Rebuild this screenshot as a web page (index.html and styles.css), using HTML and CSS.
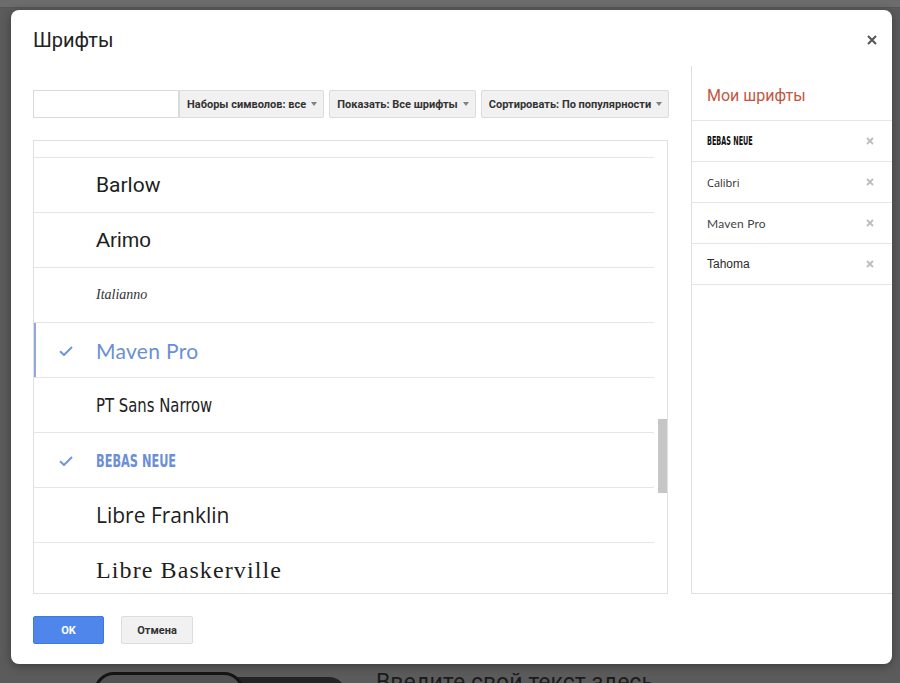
FILE: index.html
```html
<!DOCTYPE html>
<html lang="ru">
<head>
<meta charset="utf-8">
<title>Шрифты</title>
<link rel="stylesheet" href="styles.css">
</head>
<body>
<div class="page">
  <div class="topbar"></div>
  <div class="page-row">
    <div class="pills">
      <div class="pill-outline"></div>
      <div class="pill-dark"></div>
    </div>
    <div class="page-text">Введите свой текст здесь</div>
  </div>
</div>

<div class="dialog">
  <div class="dlg-header">
    <h1 class="dlg-title">Шрифты</h1>
    <button class="dlg-close" aria-label="Закрыть">
      <svg width="10" height="10" viewBox="0 0 10 10"><path d="M1 1L9 9M9 1L1 9" stroke="#555" stroke-width="2" fill="none"/></svg>
    </button>
  </div>

  <div class="dlg-main">
    <div class="toolbar">
      <input class="search" type="text">
      <div class="dropdown dd-first"><span>Наборы символов: все</span><i class="caret"></i></div>
      <div class="dropdown"><span>Показать: Все шрифты</span><i class="caret"></i></div>
      <div class="dropdown dd-last"><span>Сортировать: По популярности</span><i class="caret"></i></div>
    </div>

    <div class="font-list">
      <div class="rows">
        <div class="row row-partial"></div>
        <div class="row"><span class="fn f-barlow">Barlow</span></div>
        <div class="row"><span class="fn f-arimo">Arimo</span></div>
        <div class="row"><span class="fn f-italianno">Italianno</span></div>
        <div class="row row-active selected">
          <svg class="check" width="14" height="10" viewBox="0 0 14 10"><path d="M1 5.2L5 9L13 1" stroke="#7097da" stroke-width="2" fill="none"/></svg>
          <span class="fn f-maven">Maven Pro</span>
        </div>
        <div class="row"><span class="fn f-ptnarrow">PT Sans Narrow</span></div>
        <div class="row selected">
          <svg class="check" width="14" height="10" viewBox="0 0 14 10"><path d="M1 5.2L5 9L13 1" stroke="#7097da" stroke-width="2" fill="none"/></svg>
          <span class="fn f-bebas">BEBAS NEUE</span>
        </div>
        <div class="row"><span class="fn f-franklin">Libre Franklin</span></div>
        <div class="row"><span class="fn f-basker">Libre Baskerville</span></div>
      </div>
      <div class="scrolltrack"><div class="thumb"></div></div>
    </div>
  </div>

  <aside class="my-fonts">
    <h2 class="my-title">Мои шрифты</h2>
    <ul class="my-list">
      <li><span class="mf mf-bebas">BEBAS NEUE</span><svg class="rm" width="8" height="8" viewBox="0 0 8 8"><path d="M1 1L7 7M7 1L1 7" stroke="#bdbdbd" stroke-width="1.8" fill="none"/></svg></li>
      <li><span class="mf mf-calibri">Calibri</span><svg class="rm" width="8" height="8" viewBox="0 0 8 8"><path d="M1 1L7 7M7 1L1 7" stroke="#bdbdbd" stroke-width="1.8" fill="none"/></svg></li>
      <li><span class="mf mf-maven">Maven Pro</span><svg class="rm" width="8" height="8" viewBox="0 0 8 8"><path d="M1 1L7 7M7 1L1 7" stroke="#bdbdbd" stroke-width="1.8" fill="none"/></svg></li>
      <li><span class="mf mf-tahoma">Tahoma</span><svg class="rm" width="8" height="8" viewBox="0 0 8 8"><path d="M1 1L7 7M7 1L1 7" stroke="#bdbdbd" stroke-width="1.8" fill="none"/></svg></li>
    </ul>
  </aside>

  <div class="dlg-footer">
    <button class="btn btn-ok">OK</button>
    <button class="btn btn-cancel">Отмена</button>
  </div>
</div>
</body>
</html>
```

FILE: styles.css
```css
html, body {
  margin: 0;
  padding: 0;
  height: 100%;
  overflow: hidden;
}
body {
  background: #5b5b5b;
  font-family: Roboto, "Liberation Sans", Arial, sans-serif;
  color: #222;
}

/* backdrop page */
.page {
  display: flex;
  flex-direction: column;
}
.topbar {
  height: 7px;
  background: #6c6c6c;
  border-bottom: 1px solid #575757;
}
.page-row {
  display: flex;
  align-items: flex-start;
  margin-top: 664px;
}
.pills {
  display: flex;
  align-items: flex-start;
  margin-left: 94px;
}
.pill-outline {
  width: 144px;
  height: 34px;
  border: 3px solid #141414;
  border-radius: 20px;
  background: #525252;
  position: relative;
  z-index: 1;
}
.pill-dark {
  width: 112px;
  height: 34px;
  margin-left: -10px;
  margin-top: 5px;
  background: #242424;
  border-radius: 0 18px 18px 0;
}
.page-text {
  margin-left: 30px;
  margin-top: -3px;
  font-size: 23px;
  line-height: 28px;
  color: #1b1b1b;
}

/* dialog */
.dialog {
  position: absolute;
  left: 11px;
  top: 10px;
  width: 881px;
  height: 654px;
  background: #fff;
  border-radius: 8px;
  box-shadow: 0 2px 10px rgba(0,0,0,0.35);
  display: grid;
  grid-template-columns: minmax(0, 1fr) 201px;
  grid-template-rows: 56px minmax(0, 1fr) 70px;
  overflow: hidden;
}
.dlg-header {
  grid-column: 1 / -1;
  display: flex;
  align-items: center;
  justify-content: space-between;
  padding: 4px 15px 0 22px;
}
.dlg-title {
  margin: 0;
  font-weight: 400;
  font-size: 20px;
  color: #222;
}
.dlg-close {
  border: 0;
  background: none;
  padding: 0;
  width: 10px;
  height: 10px;
  display: flex;
}

.dlg-main {
  display: flex;
  flex-direction: column;
  gap: 22px;
  padding: 24px 23px 0 22px;
  min-height: 0;
  min-width: 0;
}
.toolbar {
  display: flex;
  height: 28px;
}
.search {
  box-sizing: border-box;
  width: 146px;
  flex: none;
  height: 28px;
  margin: 0;
  border: 1px solid #d9d9d9;
  background: #fff;
  padding: 0 6px;
}
.dropdown {
  box-sizing: border-box;
  height: 28px;
  display: flex;
  align-items: center;
  gap: 5px;
  padding: 0 6px 0 7px;
  background: #f1f1f1;
  border: 1px solid #dcdcdc;
  border-radius: 2px;
  font-size: 11px;
  font-weight: 700;
  color: #333;
  margin-left: 5px;
  white-space: nowrap;
}
.dd-first {
  margin-left: 0;
  border-radius: 0 2px 2px 0;
}
.dd-last {
  flex: 1;
}
.caret {
  width: 0;
  height: 0;
  border-left: 3px solid transparent;
  border-right: 3px solid transparent;
  border-top: 4px solid #808080;
}

.font-list {
  flex: 1;
  min-height: 0;
  border: 1px solid #e0e0e0;
  display: grid;
  grid-template-columns: minmax(0, 1fr) 13px;
  overflow: hidden;
}
.rows {
  display: flex;
  flex-direction: column;
  overflow: hidden;
}
.row {
  flex: 0 0 54px;
  border-bottom: 1px solid #e6e6e6;
  display: flex;
  align-items: center;
  padding-left: 62px;
  position: relative;
}
.row-partial {
  flex-basis: 16px;
}
.row-active {
  box-shadow: inset 2px 0 0 #93a9de;
}
.check {
  position: absolute;
  left: 25px;
  top: 23px;
}
.fn {
  white-space: nowrap;
  color: #1e1e1e;
}
.selected .fn {
  color: #6a8fd6;
}
.f-barlow {
  font-family: Roboto, sans-serif;
  font-size: 21px;
}
.f-arimo {
  font-family: "Liberation Sans", Arimo, sans-serif;
  font-size: 21px;
}
.f-italianno {
  font-family: "Liberation Serif", serif;
  font-style: italic;
  font-size: 14px;
  color: #333;
}
.f-maven {
  font-family: Lato, sans-serif;
  font-size: 21px;
  letter-spacing: 0.3px;
}
.f-ptnarrow {
  display: inline-block;
  font-family: "DejaVu Sans Condensed", sans-serif;
  font-size: 19px;
  transform: scaleX(0.87);
  transform-origin: left center;
}
.f-bebas {
  display: inline-block;
  font-family: "DejaVu Sans Condensed", sans-serif;
  font-weight: 700;
  font-size: 18px;
  transform: scaleX(0.7);
  transform-origin: left center;
}
.f-franklin {
  font-family: "Open Sans", sans-serif;
  font-size: 21px;
}
.f-basker {
  font-family: "Liberation Serif", serif;
  font-size: 24px;
  letter-spacing: 1.1px;
}
.scrolltrack {
  display: flex;
  flex-direction: column;
  align-items: flex-end;
}
.thumb {
  margin-top: 278px;
  width: 9px;
  height: 74px;
  background: #c6c6c6;
}

/* my fonts panel */
.my-fonts {
  border-left: 1px solid #e0e0e0;
  border-bottom: 1px solid #e0e0e0;
  display: flex;
  flex-direction: column;
  min-width: 0;
}
.my-title {
  box-sizing: border-box;
  margin: 0;
  height: 55px;
  display: flex;
  align-items: center;
  padding: 4px 0 0 15px;
  font-size: 16px;
  font-weight: 400;
  color: #c2573f;
  border-bottom: 1px solid #e6e6e6;
}
.my-list {
  list-style: none;
  margin: 0;
  padding: 0;
}
.my-list li {
  height: 40px;
  border-bottom: 1px solid #e6e6e6;
  display: flex;
  align-items: center;
  justify-content: space-between;
  padding: 0 18px 0 15px;
}
.mf {
  color: #2a2a2a;
  white-space: nowrap;
}
.mf-bebas {
  display: inline-block;
  font-family: "DejaVu Sans Condensed", sans-serif;
  font-weight: 700;
  font-size: 12px;
  transform: scaleX(0.6);
  transform-origin: left center;
  color: #111;
}
.mf-calibri {
  font-family: "Open Sans", sans-serif;
  font-size: 11px;
}
.mf-maven {
  font-family: Lato, sans-serif;
  font-size: 12px;
  color: #444;
  letter-spacing: 0.2px;
}
.mf-tahoma {
  font-family: "Liberation Sans", sans-serif;
  font-size: 12px;
}
.rm {
  flex: none;
}

/* footer */
.dlg-footer {
  grid-column: 1 / -1;
  display: flex;
  align-items: flex-start;
  gap: 17px;
  padding: 22px 22px 0;
}
.btn {
  height: 28px;
  box-sizing: border-box;
  font-family: Roboto, "Liberation Sans", sans-serif;
  font-size: 11px;
  font-weight: 700;
  border-radius: 2px;
  padding: 0;
  cursor: pointer;
}
.btn-ok {
  width: 71px;
  background: #4f86ec;
  border: 1px solid #3f79e6;
  color: #fff;
}
.btn-cancel {
  width: 72px;
  background: #f1f1f1;
  border: 1px solid #dcdcdc;
  color: #333;
}
```
